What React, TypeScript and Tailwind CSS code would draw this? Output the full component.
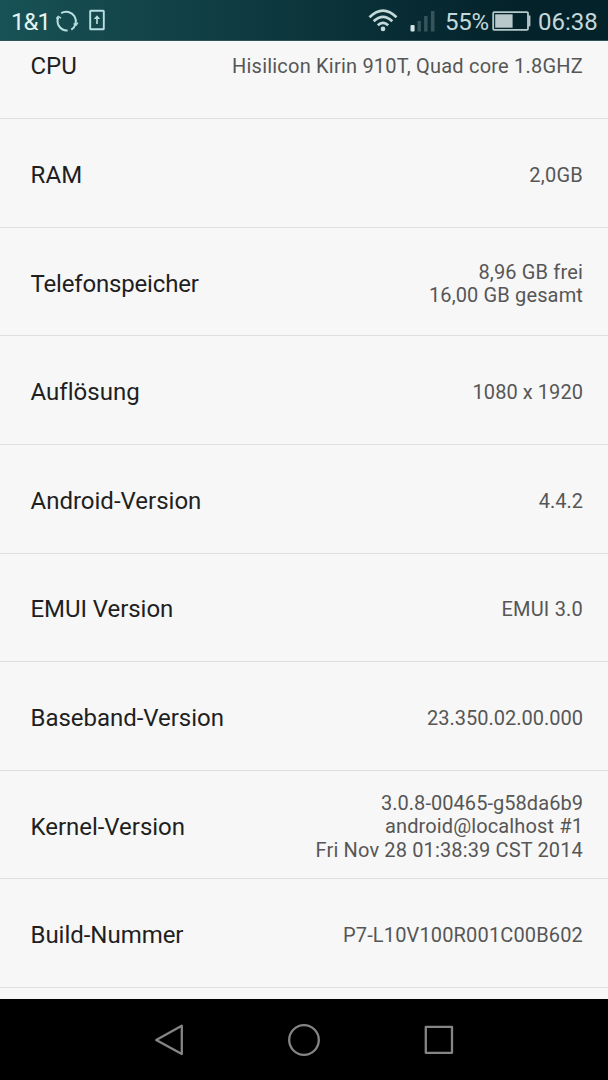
type Line = { text: string; tracking?: string };
type Row = { label: string; tracking: string; value: Line[] };

const rows: Row[] = [
  { label: 'CPU', tracking: 'tracking-normal', value: [{ text: 'Hisilicon Kirin 910T, Quad core 1.8GHZ', tracking: 'tracking-[0.21px]' }] },
  { label: 'RAM', tracking: 'tracking-[0.2px]', value: [{ text: '2,0GB', tracking: 'tracking-[0.25px]' }] },
  {
    label: 'Telefonspeicher',
    tracking: 'tracking-[-0.17px]',
    value: [
      { text: '8,96 GB frei', tracking: 'tracking-[0.16px]' },
      { text: '16,00 GB gesamt', tracking: 'tracking-[0.14px]' },
    ],
  },
  { label: 'Auflösung', tracking: 'tracking-[0.03px]', value: [{ text: '1080 x 1920', tracking: 'tracking-[0.06px]' }] },
  { label: 'Android-Version', tracking: 'tracking-normal', value: [{ text: '4.4.2' }] },
  { label: 'EMUI Version', tracking: 'tracking-[-0.06px]', value: [{ text: 'EMUI 3.0', tracking: 'tracking-[0.2px]' }] },
  { label: 'Baseband-Version', tracking: 'tracking-[-0.03px]', value: [{ text: '23.350.02.00.000' }] },
  {
    label: 'Kernel-Version',
    tracking: 'tracking-[-0.03px]',
    value: [
      { text: '3.0.8-00465-g58da6b9', tracking: 'tracking-[0.05px]' },
      { text: 'android@localhost #1', tracking: 'tracking-[0.12px]' },
      { text: 'Fri Nov 28 01:38:39 CST 2014', tracking: 'tracking-[0.14px]' },
    ],
  },
  { label: 'Build-Nummer', tracking: 'tracking-[-0.03px]', value: [{ text: 'P7-L10V100R001C00B602', tracking: 'tracking-[0.15px]' }] },
];

function StatusBar() {
  return (
    <header className="flex h-[41px] shrink-0 items-center border-b border-[#2f5458] bg-linear-to-r from-[#185256] via-[#0b3239] via-55% to-[#04222a] to-85% pl-[11px] pr-[10px] text-[24px] leading-[28px] text-[#c3d8da]">
      <span className="mt-[3px] w-[39px] whitespace-nowrap tracking-[-0.9px] text-[#e4f4f4]">1&amp;1</span>
      <svg className="ml-[5px] mt-px shrink-0" width="24" height="24" viewBox="0 0 24 24" fill="none" stroke="#b9e0e0" strokeWidth="2">
        <path d="M6.2 4.2A9.5 9.5 0 1 1 16.3 20.6M12.6 21.5A9.5 9.5 0 0 1 3.2 8.6" />
        <path d="M1.4 9.8l1.8-2.4 2.8 1.8M22.8 13.6l-1.6 2.4-2.6-1.4" strokeWidth="1.5" />
      </svg>
      <svg className="ml-[10px] shrink-0" width="16" height="22" viewBox="0 0 16 22" fill="none" stroke="#b9e0e0" strokeWidth="1.9">
        <rect x="1.2" y="1.7" width="13.6" height="18.6" rx="0.6" />
        <path d="M8 15V8" strokeWidth="1.6" />
        <path d="M4.8 10 8 6.3l3.2 3.7z" fill="#b9e0e0" stroke="none" />
      </svg>
      <div className="flex-1" />
      <svg className="shrink-0" width="30" height="24" viewBox="0 0 30 24" fill="none" stroke="#c3dadb" strokeWidth="2.7">
        <path d="M1.5 9.2Q15 -4 28.5 9.2M5.7 13.3Q15 4.4 24.3 13.3M9.8 17.3Q15 12.4 20.2 17.3" />
        <circle cx="15" cy="20.9" r="2.3" fill="#c3dadb" stroke="none" />
      </svg>
      <svg className="ml-[12.5px] mt-px shrink-0" width="26" height="24" viewBox="0 0 26 24">
        <rect x="0.5" y="16" width="4.1" height="6.5" rx="1" fill="#d3e6e6" />
        <g fill="#35555b">
          <rect x="7.5" y="12" width="3.4" height="10.5" />
          <rect x="14.1" y="7" width="3.4" height="15.5" />
          <rect x="20.9" y="2" width="3.6" height="20.5" />
        </g>
      </svg>
      <span className="ml-[9px] mt-[3px] w-[45px] whitespace-nowrap tracking-[-0.2px]">55%</span>
      <svg className="ml-[2px] mt-px shrink-0" width="39" height="22" viewBox="0 0 39 22" fill="none">
        <rect x="1.2" y="2.2" width="34.8" height="17.6" rx="1" stroke="#b5c9cb" strokeWidth="1.8" />
        <rect x="3.2" y="4.3" width="17.4" height="13.4" fill="#b9c9cb" />
        <path d="M36.5 5.5h1.9v10.8h-1.9z" fill="#b5c9cb" />
      </svg>
      <span className="ml-[7px] mt-[3px] w-[60px] whitespace-nowrap">06:38</span>
    </header>
  );
}

export default function App() {
  return (
    <div className="flex h-[1080px] w-[608px] flex-col overflow-hidden bg-[#f7f7f7] font-['Roboto',sans-serif]">
      <StatusBar />
      <main className="flex min-h-0 flex-1 flex-col justify-end overflow-hidden pb-[11px]">
        {rows.map((row) => (
          <section key={row.label} className="flex h-[108.6px] shrink-0 items-center justify-between border-b border-[#dfdfdf] pl-[30.5px] pr-[25px] pt-[4px]">
            <h2 className={`text-[24px] leading-[28px] text-[#1f1f1f] ${row.tracking}`}>{row.label}</h2>
            <div className="pt-px text-right text-[20px] leading-[23.5px] text-[#565656]">
              {row.value.map((line) => (
                <p key={line.text} className={line.tracking}>{line.text}</p>
              ))}
            </div>
          </section>
        ))}
      </main>
      <nav className="flex h-[81px] shrink-0 items-center justify-center gap-[99px] bg-black text-[#858585]">
        <svg width="36" height="36" viewBox="0 0 36 36" fill="none" stroke="currentColor" strokeWidth="2.3" strokeLinejoin="round">
          <path d="M30.8 3.8v28.3L5.2 18z" />
        </svg>
        <svg width="36" height="36" viewBox="0 0 36 36" fill="none" stroke="currentColor" strokeWidth="2.3">
          <circle cx="18" cy="18" r="14.8" />
        </svg>
        <svg width="36" height="36" viewBox="0 0 36 36" fill="none" stroke="currentColor" strokeWidth="2.3" strokeLinejoin="round">
          <rect x="4.8" y="4.8" width="26.2" height="26" />
        </svg>
      </nav>
    </div>
  );
}
